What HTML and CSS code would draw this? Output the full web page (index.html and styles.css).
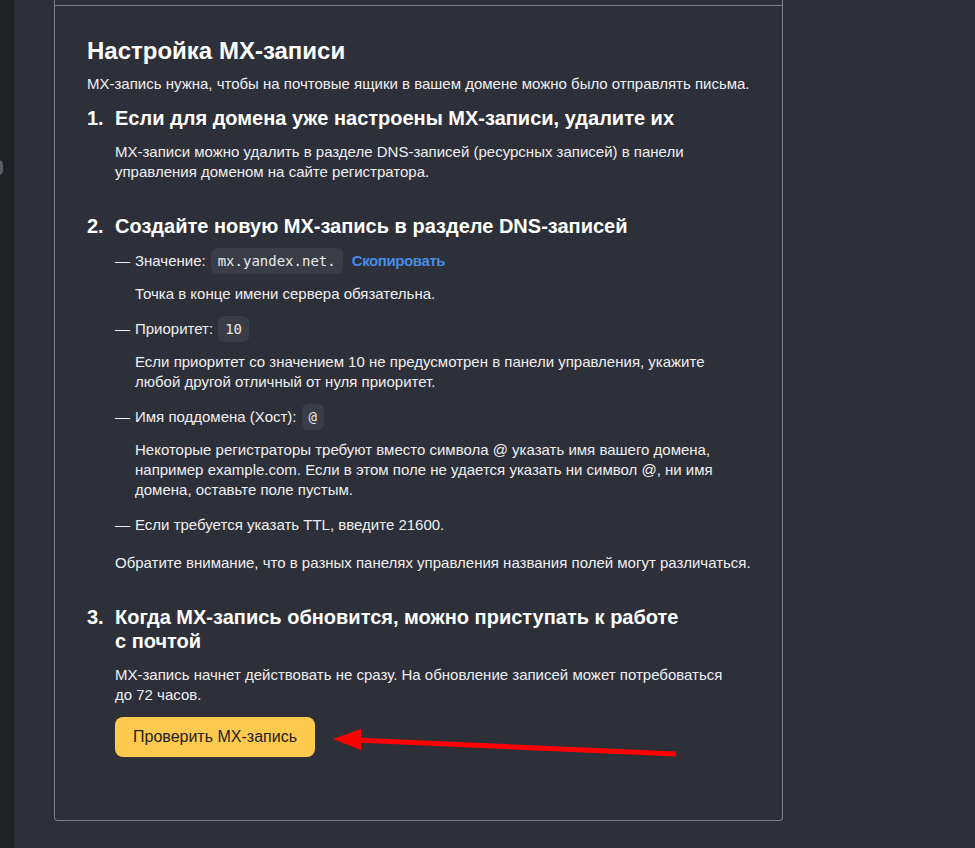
FILE: index.html
```html
<!DOCTYPE html>
<html lang="ru">
<head>
<meta charset="utf-8">
<title>Настройка MX-записи</title>
<link rel="stylesheet" href="styles.css">
</head>
<body>
<div class="page">
  <aside class="rail"><span class="rail-knob"></span></aside>
  <main class="main">
    <section class="card">
      <div class="card-top"></div>
      <div class="card-body">
        <h1 class="title">Настройка MX-записи</h1>
        <p class="lead">MX-запись нужна, чтобы на почтовые ящики в вашем домене можно было отправлять письма.</p>

        <div class="step step-first">
          <h2 class="step-head"><span class="step-num">1.</span><span class="step-text">Если для домена уже настроены MX-записи, удалите их</span></h2>
          <p class="step-para">MX-записи можно удалить в разделе DNS-записей (ресурсных записей) в панели<br>управления доменом на сайте регистратора.</p>
        </div>

        <div class="step">
          <h2 class="step-head"><span class="step-num">2.</span><span class="step-text">Создайте новую MX-запись в разделе DNS-записей</span></h2>
          <div class="field">
            <div class="field-row"><span class="dash">—</span>Значение:<code class="chip">mx.yandex.net.</code><a class="copy" href="#">Скопировать</a></div>
            <p class="field-note">Точка в конце имени сервера обязательна.</p>
          </div>
          <div class="field">
            <div class="field-row"><span class="dash">—</span>Приоритет:<code class="chip">10</code></div>
            <p class="field-note">Если приоритет со значением 10 не предусмотрен в панели управления, укажите<br>любой другой отличный от нуля приоритет.</p>
          </div>
          <div class="field">
            <div class="field-row"><span class="dash">—</span>Имя поддомена (Хост):<code class="chip">@</code></div>
            <p class="field-note">Некоторые регистраторы требуют вместо символа @ указать имя вашего домена,<br>например example.com. Если в этом поле не удается указать ни символ @, ни имя<br>домена, оставьте поле пустым.</p>
          </div>
          <div class="field">
            <div class="field-row"><span class="dash">—</span>Если требуется указать TTL, введите 21600.</div>
          </div>
          <p class="step-para step-foot">Обратите внимание, что в разных панелях управления названия полей могут различаться.</p>
        </div>

        <div class="step">
          <h2 class="step-head"><span class="step-num">3.</span><span class="step-text">Когда MX-запись обновится, можно приступать к работе<br>с почтой</span></h2>
          <p class="step-para">MX-запись начнет действовать не сразу. На обновление записей может потребоваться<br>до 72 часов.</p>
          <button class="check-btn" type="button">Проверить MX-запись</button>
        </div>
      </div>
    </section>
  </main>
</div>
<svg class="arrow" width="975" height="848" viewBox="0 0 975 848" aria-hidden="true">
  <line x1="676" y1="754" x2="356" y2="740" stroke="#ff0000" stroke-width="5"/>
  <polygon points="333,739 361,729 361,750" fill="#ff0000"/>
</svg>
</body>
</html>
```

FILE: styles.css
```css
html, body {
  margin: 0;
  padding: 0;
  background: #2e3039;
  color: #eeeff2;
  font-family: "Liberation Sans", Arial, sans-serif;
  font-size: 15px;
  line-height: 20px;
}

.page {
  display: flex;
  min-height: 848px;
}

.rail {
  width: 14px;
  flex: none;
  background: #202125;
  position: relative;
}

.rail-knob {
  position: absolute;
  left: -6px;
  top: 160px;
  width: 9px;
  height: 15px;
  border-radius: 5px;
  background: #5a5d66;
}

.main {
  flex: 1;
  padding-left: 40px;
}

.card {
  width: 727px;
  border: 1px solid #7b7e87;
  border-top: 0;
  border-radius: 0 0 4px 4px;
}

.card-top {
  height: 5px;
  border-bottom: 1px solid #7b7e87;
}

.card-body {
  padding: 30px 20px 63px 32px;
}

.title {
  margin: 0;
  font-size: 24px;
  line-height: 30px;
  font-weight: 700;
  color: #ffffff;
}

.lead {
  margin: 8px 0 0;
}

.step {
  margin-top: 32px;
}

.step-first {
  margin-top: 12px;
}

.step-head {
  display: flex;
  margin: 0;
  font-size: 20px;
  line-height: 24px;
  font-weight: 700;
  color: #ffffff;
}

.step-num {
  width: 28px;
  flex: none;
}

.step-para {
  margin: 12px 0 0 28px;
}

.step-foot {
  margin-top: 15px;
  white-space: nowrap;
}

.field {
  margin: 12px 0 0 28px;
}

.step-head + .field {
  margin-top: 10px;
}

.field-row {
  display: flex;
  align-items: center;
  min-height: 26px;
}

.dash {
  width: 20px;
  flex: none;
}

.chip {
  margin-left: 5px;
  padding: 3px 7px;
  border-radius: 6px;
  background: #3b3d46;
  color: #e8e9ec;
  font-family: "DejaVu Sans Mono", "Liberation Mono", monospace;
  font-size: 14px;
  line-height: 20px;
}

.copy {
  margin-left: 9px;
  color: #478ce4;
  text-decoration: none;
  font-weight: 700;
  letter-spacing: -0.4px;
}

.field-note {
  margin: 10px 0 0 20px;
}

.check-btn {
  display: block;
  margin: 12px 0 0 28px;
  width: 200px;
  height: 40px;
  border: 0;
  border-radius: 8px;
  background: #fdca4d;
  color: #222222;
  font-family: "Liberation Sans", Arial, sans-serif;
  font-size: 16px;
  cursor: pointer;
}

.arrow {
  position: absolute;
  left: 0;
  top: 0;
  pointer-events: none;
}
```
